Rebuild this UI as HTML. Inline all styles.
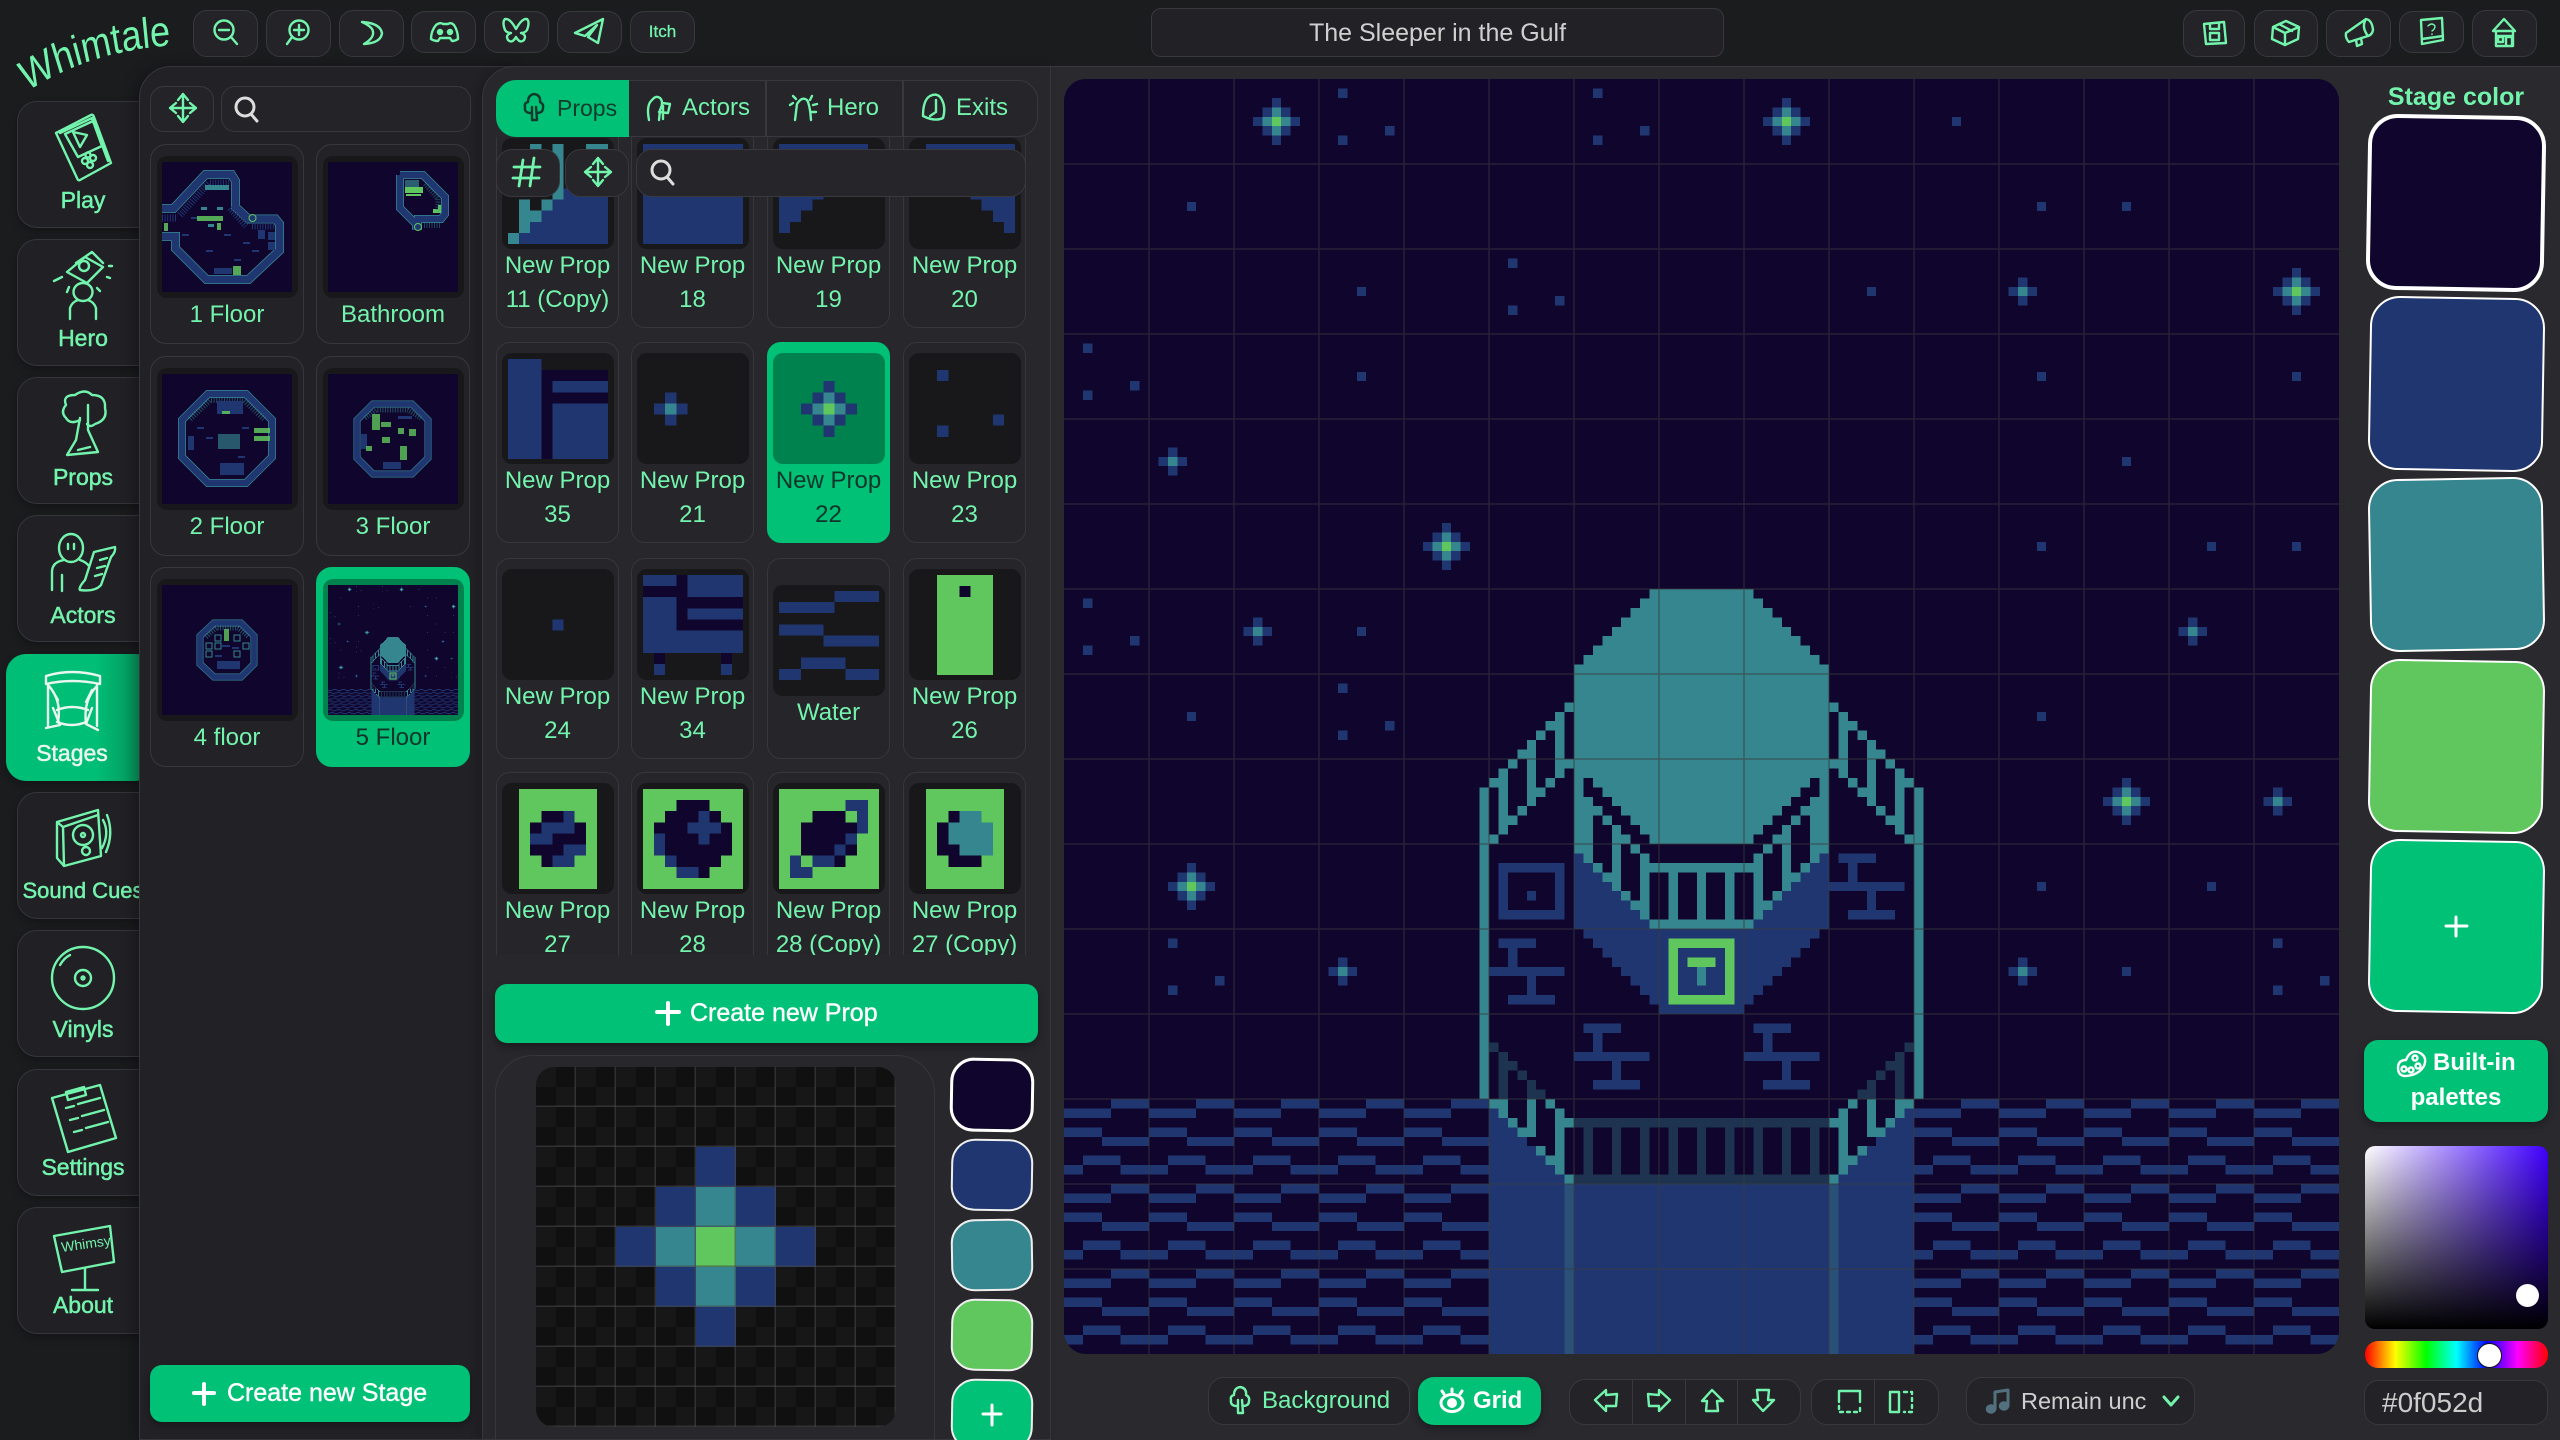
<!DOCTYPE html>
<html><head><meta charset="utf-8"><title>Whimtale</title>
<style>
*{box-sizing:border-box;margin:0;padding:0}
html,body{width:2560px;height:1440px;overflow:hidden;background:#1b1c1e;font-family:"Liberation Sans",sans-serif;color:#73f4ad}
#root{position:relative;width:2560px;height:1440px;overflow:hidden;background:#1b1c1e}
.a{position:absolute}
.x{position:absolute;white-space:nowrap;line-height:30px;font-size:24px}
.bt{position:absolute;background:#242428;border:1.5px solid #38383e;border-radius:14px}
.nv{position:absolute;left:17px;width:150px;height:127px;border:1.5px solid #35353b;border-radius:20px;background:#212125;box-shadow:0 4px 8px rgba(0,0,0,.25)}
.nl{position:absolute;left:17px;width:132px;text-align:center;line-height:30px;font-size:23px;-webkit-text-stroke:.5px currentColor;white-space:nowrap}
.c{position:absolute;width:123px;height:201px;background:#25252a;border:1.5px solid #37373d;border-radius:14px;padding:10px 4px 0}
.c .w{width:112px;height:111px;background:#18181a;border-radius:10px;padding:6px;margin:0 auto}
.c svg{display:block;width:100px;height:100px;shape-rendering:crispEdges}
.c .l{text-align:center;line-height:34px;font-size:24px;white-space:nowrap}
.on{background:#00c176!important;border-color:#00c176!important;color:#12352a!important}
.on .w{background:#00824f!important}
.f{position:absolute;width:154px;height:200px;background:#232327;border:1.5px solid #37373d;border-radius:16px;padding:11px 6px 0}
.f .w{width:141px;height:142px;background:#18181a;border-radius:10px;padding:6px 5px}
.f svg{display:block;width:130px;height:130px}
.f .l{text-align:center;line-height:34px;font-size:24px}
.sw{position:absolute;border:2px solid #fff;border-radius:30px}
.sq{position:absolute;border:2px solid #eee;border-radius:24px}
.b{fill:#203671}.t{fill:#36868f}.g{fill:#5fc75d}.n{fill:#0f052d}.d{fill:#1e3350}
</style></head><body>
<div id="root">

<!-- shared pixel defs -->
<svg width="0" height="0" style="position:absolute">
<defs>
<pattern id="wt" x="0" y="0" width="9" height="9" patternUnits="userSpaceOnUse"><path class="b" shape-rendering="crispEdges" d="M5 0h4v1H5zM0 1h5v1H0zM0 3h4v1H0zM4 4h5v1H4zM2 6h4v1H2zM0 7h2v1H0zM6 7h3v1H6z"/></pattern>
<g id="bs"><path class="b" d="M0-2h1v5H0zM-1-1h3v3h-3zM-2 0h5v1h-5z"/><path class="t" d="M0-1h1v3H0zM-1 0h3v1h-3z"/><path class="g" d="M0 0h1v1H0z"/></g>
<g id="ss"><path class="b" d="M0-1h1v3H0zM-1 0h3v1h-3z"/><path class="t" d="M0 0h1v1H0z"/></g>
<path id="s3" class="b" d="M2 1h1v1H2zM7 5h1v1H7zM2 6h1v1H2z"/>
<path id="s1" class="b" d="M0 0h1v1H0z"/>
<path id="tb" class="b" d="M1 0h4v1H1zM2 1h1v2H2zM0 3h8v1H0zM4 4h1v2H4zM2 6h5v1H2z"/>
<g id="lh">
<path class="t" d="M44 75h1v33h-1zM53 66h1v1h-1zM52 67h1v7h-1zM51 68h1v1h-1zM53 72h1v1h-1zM51 74h1v1h-1zM50 69h1v1h-1zM48 71h1v1h-1zM49 70h1v7h-1zM50 75h1v1h-1zM48 77h1v1h-1zM47 72h1v1h-1zM46 73h1v7h-1zM45 74h1v1h-1zM47 78h1v1h-1zM45 80h1v1h-1z"/>
<path class="n" d="M55 74h1v1h-1zM55 75h2v1h-2zM56 76h2v1h-2zM57 77h2v1h-2zM56 78h1v1h-1zM58 78h2v1h-2zM56 79h2v1h-2zM59 79h2v1h-2zM56 80h2v1h-2zM60 80h2v1h-2z"/>
<path class="t" d="M54 81h2v1h-2zM58 81h1v1h-1zM60 81h1v1h-1zM55 82h1v1h-1zM58 82h1v1h-1zM61 82h1v7h-1zM56 83h1v1h-1zM58 83h1v3h-1zM57 84h1v1h-1zM59 86h1v1h-1zM60 87h1v1h-1z"/>
<path class="b" d="M54 82h1v1h-1zM54 83h2v1h-2zM54 84h3v1h-3zM54 85h4v1h-4zM54 86h5v1h-5zM54 87h6v1h-6zM54 88h7v1h-7zM54 89h8v1h-8z"/>
<path class="d" d="M45 102h1v1h-1zM46 103h1v5h-1zM47 104h1v1h-1zM48 105h1v1h-1zM49 106h1v2h-1zM50 107h1v1h-1z"/>
<path class="b" d="M45 109h1v1h-1zM45 110h2v1h-2zM45 111h3v1h-3zM45 112h4v1h-4zM45 113h5v1h-5zM45 114h6v1h-6zM45 115h7v1h-7zM45 116h8v1h-8z"/>
<path class="t" d="M45 108h2v1h-2zM49 108h1v4h-1zM51 108h1v1h-1zM46 109h1v1h-1zM52 109h1v7h-1zM47 110h1v1h-1zM53 110h1v1h-1zM48 111h1v1h-1zM50 113h1v1h-1zM51 114h1v1h-1zM53 116h1v1h-1z"/>
<path fill="#2a5078" d="M53 117h1v18h-1z"/>
</g>
<symbol id="st" viewBox="0 0 135 135" shape-rendering="crispEdges">
<rect width="135" height="135" class="n"/>
<rect x="0" y="108" width="45" height="27" fill="url(#wt)"/>
<rect x="90" y="108" width="45" height="27" fill="url(#wt)"/>
<use href="#bs" x="22" y="4"/><use href="#bs" x="76" y="4"/><use href="#bs" x="130" y="22"/><use href="#bs" x="40" y="49"/><use href="#bs" x="112" y="76"/><use href="#bs" x="13" y="85"/>
<use href="#ss" x="101" y="22"/><use href="#ss" x="11" y="40"/><use href="#ss" x="20" y="58"/><use href="#ss" x="119" y="58"/><use href="#ss" x="128" y="76"/><use href="#ss" x="29" y="94"/><use href="#ss" x="101" y="94"/>
<use href="#s3" x="27" y="0"/><use href="#s3" x="54" y="0"/><use href="#s3" x="0" y="27"/><use href="#s3" x="45" y="18"/><use href="#s3" x="0" y="54"/><use href="#s3" x="27" y="63"/><use href="#s3" x="9" y="90"/><use href="#s3" x="126" y="90"/>
<use href="#s1" x="94" y="4"/><use href="#s1" x="13" y="13"/><use href="#s1" x="103" y="13"/><use href="#s1" x="112" y="13"/><use href="#s1" x="31" y="22"/><use href="#s1" x="85" y="22"/><use href="#s1" x="31" y="31"/><use href="#s1" x="103" y="31"/><use href="#s1" x="130" y="31"/><use href="#s1" x="112" y="40"/><use href="#s1" x="121" y="49"/><use href="#s1" x="103" y="49"/><use href="#s1" x="130" y="49"/><use href="#s1" x="13" y="67"/><use href="#s1" x="103" y="67"/><use href="#s1" x="121" y="85"/><use href="#s1" x="103" y="85"/><use href="#s1" x="112" y="94"/><use href="#s1" x="31" y="58"/>
<!-- dome -->
<path class="t" d="M62 54h11v1H62zM61 55h13v1H61zM60 56h15v1H60zM59 57h17v1H59zM58 58h19v1H58zM57 59h21v1H57zM56 60h23v1H56zM55 61h25v1H55zM54 62h27v19H54z"/>
<!-- lower center -->
<path class="n" d="M56 81h23v3H56z"/>
<path class="t" d="M62 83h11v1H62zM62 89h11v1H62zM64 84h1v5h-1zM67 84h1v5h-1zM70 84h1v5h-1z"/>
<path class="b" d="M55 90h25v1H55zM56 91h23v1H56zM57 92h21v1H57zM58 93h19v1H58zM59 94h17v1H59zM60 95h15v1H60zM61 96h13v1H61zM62 97h11v1H62zM63 98h9v1h-9z"/>
<path class="g" d="M64 91h7v7h-7z"/>
<path class="b" d="M65 92h5v5h-5z"/>
<path class="g" d="M66 93h3v1h-3z"/>
<path class="t" d="M67 94h1v2h-1z"/>
<use href="#lh"/><use href="#lh" transform="translate(135,0) scale(-1,1)"/>
<use href="#tb" x="54" y="100"/><use href="#tb" x="72" y="100"/><use href="#tb" x="45" y="91"/><use href="#tb" x="81" y="82"/>
<path class="b" fill-rule="evenodd" d="M46 83h7v6h-7zM47 84v4h5v-4zM49 86h1v1h-1z"/>
<path class="b" d="M45 117h45v18H45z"/>
<path fill="#2a5078" d="M53 117h1v18h-1zM81 117h1v18h-1z"/>
<path class="d" d="M54 110h27v1H54zM54 116h27v1H54zM55 111h1v5h-1zM58 111h1v5h-1zM61 111h1v5h-1zM64 111h1v5h-1zM67 111h1v5h-1zM70 111h1v5h-1zM73 111h1v5h-1zM76 111h1v5h-1zM79 111h1v5h-1z"/>
</symbol>
<path id="mv" d="M0-14V14M-13 0H13M-5-8L0-14L5-8M-5 8L0 14L5 8M-7-5L-13 0L-7 5M7-5L13 0L7 5"/>
<g id="se"><circle cx="0" cy="0" r="9" /><path d="M6 7L12 14"/></g>
<path id="tr" d="M-3 6Q-10 6-9 0Q-10-4-6-5Q-6-12 0-13Q7-12 6-5Q10-3 9 1Q9 6 3 6M-2 0L-2 13L3 13L2 0"/>
</defs></svg>

<!-- NAV -->
<div class="nv" style="top:101px"></div>
<div class="nv" style="top:239px"></div>
<div class="nv" style="top:377px"></div>
<div class="nv" style="top:515px"></div>
<div class="nv" style="top:654px;left:6px;border:0;background:linear-gradient(90deg,#00be75 0,#00be75 60%,#05945b 90%)"></div>
<div class="nv" style="top:792px"></div>
<div class="nv" style="top:930px"></div>
<div class="nv" style="top:1069px"></div>
<div class="nv" style="top:1207px"></div>
<div class="nl" style="top:185px">Play</div>
<div class="nl" style="top:323px">Hero</div>
<div class="nl" style="top:462px">Props</div>
<div class="nl" style="top:600px">Actors</div>
<div class="nl" style="top:738px;left:6px;color:#eaf7f0">Stages</div>
<div class="nl" style="top:876px;font-size:22px">Sound Cues</div>
<div class="nl" style="top:1014px">Vinyls</div>
<div class="nl" style="top:1152px">Settings</div>
<div class="nl" style="top:1290px">About</div>

<!-- TOP BAR -->
<div class="bt" style="left:193px;top:10px;width:65px;height:47px"></div>
<div class="bt" style="left:266px;top:10px;width:65px;height:47px"></div>
<div class="bt" style="left:339px;top:10px;width:65px;height:47px"></div>
<div class="bt" style="left:411px;top:11px;width:65px;height:42px"></div>
<div class="bt" style="left:484px;top:11px;width:65px;height:42px"></div>
<div class="bt" style="left:557px;top:11px;width:65px;height:42px"></div>
<div class="bt" style="left:630px;top:11px;width:65px;height:42px"></div>
<div class="x" style="left:630px;width:65px;top:17px;text-align:center;font-size:17px;-webkit-text-stroke:.3px currentColor">Itch</div>
<div class="bt" style="left:1151px;top:8px;width:573px;height:49px;background:#222226;border-radius:10px"></div>
<div class="x" style="left:1151px;width:573px;top:18px;text-align:center;font-size:25px;color:#d0d0d0">The Sleeper in the Gulf</div>
<div class="bt" style="left:2183px;top:10px;width:62px;height:47px"></div>
<div class="bt" style="left:2254px;top:10px;width:64px;height:47px"></div>
<div class="bt" style="left:2326px;top:10px;width:65px;height:47px"></div>
<div class="bt" style="left:2399px;top:11px;width:65px;height:42px"></div>
<div class="bt" style="left:2472px;top:10px;width:65px;height:47px"></div>

<!-- MAIN BG -->
<div class="a" style="left:1000px;top:66px;width:1560px;height:1374px;background:#29292e;border-top:1.5px solid #3a3a40"></div>

<!-- STAGE LIST PANEL -->
<div class="a" style="left:139px;top:66px;width:380px;height:1374px;background:#222226;border:1.5px solid #36363c;border-radius:32px 0 0 0;box-shadow:-6px 0 12px rgba(0,0,0,.25)"></div>
<div class="bt" style="left:150px;top:86px;width:64px;height:46px"></div>
<div class="bt" style="left:221px;top:86px;width:250px;height:46px"></div>

<div class="f" style="left:150px;top:144px"><div class="w"><svg viewBox="0 0 130 130"><rect width="130" height="130" class="n"/>
<path d="M0 46.5L11.5 46.5L43.5 12.5L69.5 12.5L73.5 19L73.5 45L86.5 57L113.5 57L117.5 62L117.5 88.5L86.5 117.5L44.5 117.5L13.5 86.5L13.5 74.5L0 74.5" fill="none" stroke="#36868f" stroke-width="9"/>
<path d="M0 46.5L11.5 46.5L43.5 12.5L69.5 12.5L73.5 19L73.5 45L86.5 57L113.5 57L117.5 62L117.5 88.5L86.5 117.5L44.5 117.5L13.5 86.5L13.5 74.5L0 74.5" fill="none" stroke="#203671" stroke-width="7.4"/>
<path d="M18 53L47 21L68 21M68 46L84 64M90 64H112M0 56H15" fill="none" stroke="#203671" stroke-width="7" stroke-dasharray="1 1.6"/>
<path class="t" d="M43 23h24v5H43zM39 45h6v3h-6zM55 45h6v3h-6zM46 62h6v3h-6z"/>
<path class="b" d="M96 68h7v9h-7zM106 70h7v8h-7zM106 80h7v8h-7zM29 55h7v2h-7zM20 72h7v2h-7zM62 72h7v2h-7zM81 80h7v2h-7zM90 88h7v2h-7zM44 88h7v2h-7zM72 97h7v2h-7zM52 106h18v6H52z"/>
<path class="g" d="M35 54h26v5H35zM55 61h4v7h-4zM2 61h4v8H2zM71 104h8v9h-8z" opacity=".85"/>
<circle cx="90.500" cy="56" r="3.500" fill="none" stroke="#5fc75d"/></svg></div><div class="l">1 Floor</div></div>

<div class="f" style="left:316px;top:144px"><div class="w"><svg viewBox="0 0 130 130"><rect width="130" height="130" class="n"/>
<path d="M72 13L95 13L117 35L117 52L113 57L90 57L90 68M72 13L72 46L88 62L88 68" fill="none" stroke="#36868f" stroke-width="8"/>
<path d="M72 13L95 13L117 35L117 52L113 57L90 57L90 68M72 13L72 46L88 62L88 68" fill="none" stroke="#203671" stroke-width="6.500"/>
<path class="t" d="M77 18h14v7H77z" opacity=".7"/>
<path class="g" d="M77 25h18v6H77zM78 32h15v2H78zM105 47h8v4h-8zM110 43h3v5h-3z"/>
<path d="M97 22L110 37V50" fill="none" stroke="#36868f" stroke-width="5" stroke-dasharray="1 1.500" opacity=".5"/>
<path d="M96 63h16" stroke="#36868f" stroke-width="6" stroke-dasharray="1 1.500" opacity=".5"/>
<circle cx="90" cy="65" r="3.500" fill="none" stroke="#5fc75d"/></svg></div><div class="l">Bathroom</div></div>

<div class="f" style="left:150px;top:356px"><div class="w"><svg viewBox="0 0 130 130"><rect width="130" height="130" class="n"/>
<polygon points="46,20 84,20 110,46 110,83 84,109 46,109 20,83 20,46" fill="none" stroke="#36868f" stroke-width="8"/>
<polygon points="46,20 84,20 110,46 110,83 84,109 46,109 20,83 20,46" fill="none" stroke="#203671" stroke-width="6.500"/>
<path d="M28 45L48 26H82L102 45" fill="none" stroke="#36868f" stroke-width="6" stroke-dasharray="1 1.600" opacity=".55"/>
<path class="b" d="M55 27h26v13H55zM26 62h6v14h-6zM58 89h24v12H58zM35 53h7v2h-7zM44 63h7v2h-7zM80 53h7v2h-7zM76 82h7v2h-7z"/>
<path class="t" d="M56 60h22v15H56z" opacity=".65"/>
<path class="g" d="M60 37h8v3h-8zM92 54h16v5H92zM92 62h16v5H92z" opacity=".85"/></svg></div><div class="l">2 Floor</div></div>

<div class="f" style="left:316px;top:356px"><div class="w"><svg viewBox="0 0 130 130"><rect width="130" height="130" class="n"/>
<polygon points="45,30 84,30 100,46 100,84 84,100 45,100 29,84 29,46" fill="none" stroke="#36868f" stroke-width="7"/>
<polygon points="45,30 84,30 100,46 100,84 84,100 45,100 29,84 29,46" fill="none" stroke="#203671" stroke-width="5.800"/>
<path d="M37 44L48 36H80L93 44" fill="none" stroke="#36868f" stroke-width="5" stroke-dasharray="1 1.500" opacity=".55"/>
<path class="b" d="M33 60h6v15h-6zM55 88h18v7H55zM70 42h14v3H70z"/>
<path class="g" d="M44 40h8v16h-8zM53 48h10v5H53zM70 54h6v6h-6zM81 55h7v7h-7zM54 63h8v6h-8zM72 72h7v14h-7zM38 72h6v5h-6z" opacity=".8"/></svg></div><div class="l">3 Floor</div></div>

<div class="f" style="left:150px;top:567px"><div class="w"><svg viewBox="0 0 130 130"><rect width="130" height="130" class="n"/>
<polygon points="52,38 79,38 92,51 92,79 79,92 52,92 38,79 38,51" fill="none" stroke="#36868f" stroke-width="7"/>
<polygon points="52,38 79,38 92,51 92,79 79,92 52,92 38,79 38,51" fill="none" stroke="#203671" stroke-width="5.800"/>
<path d="M44 52L54 43H76L87 52" fill="none" stroke="#36868f" stroke-width="5" stroke-dasharray="1 1.500" opacity=".6"/>
<path fill="none" stroke="#36868f" d="M53 50h6v6h-6zM72 50h6v6h-6zM44 58h6v6h-6zM53 58h6v6h-6zM44 66h6v6h-6zM72 66h6v6h-6zM81 58h6v6h-6z"/>
<path class="g" d="M62 44h5v12h-5z" opacity=".8"/>
<path class="b" d="M55 76h23v8H55zM60 60h8v2h-8zM70 62h7v2h-7zM53 70h7v2h-7z"/></svg></div><div class="l">4 floor</div></div>

<div class="f on" style="left:316px;top:567px"><div class="w"><svg viewBox="0 0 130 130"><use href="#st" width="130" height="130"/></svg></div><div class="l">5 Floor</div></div>

<div class="bt" style="left:150px;top:1365px;width:320px;height:57px;background:#00c176;border:0;border-radius:12px;box-shadow:0 4px 8px rgba(0,0,0,.3)"></div>
<div class="x" style="left:227px;top:1378px;color:#fff;font-size:25px;-webkit-text-stroke:.4px #fff">Create new Stage</div>

<!-- PROPS PANEL -->
<div class="a" style="left:482px;top:66px;width:569px;height:1374px;background:#27272c;border:1.5px solid #36363c;border-radius:32px 0 0 0;box-shadow:-4px 0 10px rgba(0,0,0,.2)"></div>
<div class="a" style="left:0;top:137px;width:1050px;height:818px;overflow:hidden">
<!-- row 1 -->
<div class="c" style="left:496px;top:-10px"><div class="w"><svg viewBox="0 0 9 9"><path class="t" d="M2 0h1v1H2zM4 0h1v5H4zM7 0h2v1H7zM1 5h1v3H1zM3 5h1v1H3zM2 6h1v1H2zM0 8h1v1H0z"/><path class="b" d="M4 5h5v1H4zM3 6h6v1H3zM2 7h7v1H2zM1 8h8v1H1zM5 4h4v1H5z"/></svg></div><div class="l">New Prop<br>11 (Copy)</div></div>
<div class="c" style="left:631px;top:-10px"><div class="w"><svg viewBox="0 0 9 9"><path class="b" d="M0 0h9v9H0z"/></svg></div><div class="l">New Prop<br>18</div></div>
<div class="c" style="left:767px;top:-10px"><div class="w"><svg viewBox="0 0 9 9"><path class="b" d="M0 0h8v1H0zM0 1h7v3H0zM0 4h4v1H0zM0 5h3v1H0zM0 6h2v1H0zM0 7h1v1H0z"/></svg></div><div class="l">New Prop<br>19</div></div>
<div class="c" style="left:903px;top:-10px"><div class="w"><svg viewBox="0 0 9 9"><path class="b" d="M1 0h8v1H1zM2 1h7v3H2zM5 4h4v1H5zM6 5h3v1H6zM7 6h2v1H7zM8 7h1v1H8z"/></svg></div><div class="l">New Prop<br>20</div></div>
<!-- row 2 -->
<div class="c" style="left:496px;top:205px"><div class="w"><svg viewBox="0 0 9 9"><path class="n" d="M3 1h6v8H3z"/><path class="b" d="M0 0h3v9H0zM4 2h5v1H4zM4 4h5v5H4z"/></svg></div><div class="l">New Prop<br>35</div></div>
<div class="c" style="left:631px;top:205px"><div class="w"><svg viewBox="0 0 9 9"><path class="b" d="M2 3h1v3H2zM1 4h3v1H1z"/><path class="t" d="M2 4h1v1H2z"/></svg></div><div class="l">New Prop<br>21</div></div>
<div class="c on" style="left:767px;top:205px"><div class="w"><svg viewBox="0 0 9 9"><path class="b" d="M4 2h1v5H4zM3 3h3v3H3zM2 4h5v1H2z"/><path class="t" d="M4 3h1v3H4zM3 4h3v1H3z"/><path class="g" d="M4 4h1v1H4z"/></svg></div><div class="l">New Prop<br>22</div></div>
<div class="c" style="left:903px;top:205px"><div class="w"><svg viewBox="0 0 9 9"><path class="b" d="M2 1h1v1H2zM7 5h1v1H7zM2 6h1v1H2z"/></svg></div><div class="l">New Prop<br>23</div></div>
<!-- row 3 -->
<div class="c" style="left:496px;top:421px"><div class="w"><svg viewBox="0 0 9 9"><path class="b" d="M4 4h1v1H4z"/></svg></div><div class="l">New Prop<br>24</div></div>
<div class="c" style="left:631px;top:421px"><div class="w"><svg viewBox="0 0 9 9"><path class="n" d="M0 0h9v7H0zM1 7h1v1H1zM7 7h1v1H7z"/><path class="b" d="M0 0h3v1H0zM4 0h5v2H4zM0 2h3v3H0zM4 3h5v1H4zM0 5h9v2H0zM1 8h1v1H1zM7 8h1v1H7z"/></svg></div><div class="l">New Prop<br>34</div></div>
<div class="c" style="left:767px;top:421px;padding-top:26px"><div class="w"><svg viewBox="0 0 9 9"><path class="b" d="M5 0h4v1H5zM0 1h5v1H0zM0 3h4v1H0zM4 4h5v1H4zM2 6h4v1H2zM0 7h2v1H0zM6 7h3v1H6z"/></svg></div><div class="l">Water</div></div>
<div class="c" style="left:903px;top:421px"><div class="w"><svg viewBox="0 0 9 9"><path class="g" d="M2 0h5v9H2z"/><path class="n" d="M4 1h1v1H4z"/></svg></div><div class="l">New Prop<br>26</div></div>
<!-- row 4 -->
<div class="c" style="left:496px;top:635px"><div class="w"><svg viewBox="0 0 9 9"><path class="g" d="M1 0h7v9H1z"/><path class="n" d="M3 2h2v1H3zM2 3h1v1H2zM6 3h1v1H6zM4 4h3v1H4zM2 5h3v1H2zM3 6h1v1H3z"/><path class="b" d="M5 2h1v1H5zM3 3h3v1H3zM2 4h2v1H2zM5 5h2v1H5zM4 6h2v1H4z"/></svg></div><div class="l">New Prop<br>27</div></div>
<div class="c" style="left:631px;top:635px"><div class="w"><svg viewBox="0 0 9 9"><path class="g" d="M0 0h9v9H0z"/><path class="n" d="M3 1h3v1H3zM2 2h3v1H2zM6 2h1v1H6zM1 3h3v1H1zM7 3h1v1H7zM2 4h3v1H2zM6 4h2v1H6zM2 5h6v1H2zM3 6h4v1H3zM5 7h1v1H5z"/><path class="b" d="M5 2h1v1H5zM4 3h3v1H4zM1 4h1v2H1zM5 4h1v1H5zM2 6h1v1H2zM3 7h2v1H3z"/></svg></div><div class="l">New Prop<br>28</div></div>
<div class="c" style="left:767px;top:635px"><div class="w"><svg viewBox="0 0 9 9"><path class="g" d="M0 0h9v9H0z"/><path class="n" d="M3 2h3v1H3zM2 3h5v1H2zM2 4h4v1H2zM2 5h3v1H2zM6 5h1v1H6zM5 6h1v1H5z"/><path class="b" d="M6 1h2v1H6zM7 2h1v2H7zM6 4h1v1H6zM5 5h1v1H5zM1 6h1v2H1zM3 6h2v1H3zM2 7h1v1H2z"/></svg></div><div class="l">New Prop<br>28 (Copy)</div></div>
<div class="c" style="left:903px;top:635px"><div class="w"><svg viewBox="0 0 9 9"><path class="g" d="M1 0h7v9H1z"/><path class="n" d="M3 2h1v1H3zM2 3h1v2H2zM2 5h2v1H2zM3 6h3v1H3z"/><path class="t" d="M4 2h2v1H4zM3 3h4v2H3zM4 5h3v1H4z"/></svg></div><div class="l">New Prop<br>27 (Copy)</div></div>
</div>

<!-- tabs -->
<div class="a" style="left:496px;top:80px;width:542px;height:57px;background:#25252a;border:1.5px solid #38383e;border-radius:20px"></div>
<div class="a" style="left:496px;top:80px;width:133px;height:57px;background:#00c176;border-radius:20px 0 0 20px"></div>
<div class="a" style="left:765px;top:80px;width:1.5px;height:57px;background:#38383e"></div>
<div class="a" style="left:902px;top:80px;width:1.5px;height:57px;background:#38383e"></div>
<div class="x" style="left:557px;top:93px;color:#143a2c;font-size:23px">Props</div>
<div class="x" style="left:682px;top:93px">Actors</div>
<div class="x" style="left:827px;top:93px">Hero</div>
<div class="x" style="left:956px;top:93px">Exits</div>
<!-- props toolbar -->
<div class="bt" style="left:496px;top:149px;width:64px;height:48px;background:#25252a;border-radius:16px"></div>
<div class="bt" style="left:565px;top:149px;width:64px;height:48px;background:#25252a;border-radius:16px"></div>
<div class="bt" style="left:636px;top:149px;width:390px;height:48px;background:#25252a;border-radius:16px"></div>
<!-- create prop -->
<div class="bt" style="left:495px;top:984px;width:543px;height:59px;background:#00c176;border:0;border-radius:12px;box-shadow:0 4px 8px rgba(0,0,0,.3)"></div>
<div class="x" style="left:690px;top:998px;color:#fff;font-size:25px;-webkit-text-stroke:.4px #fff">Create new Prop</div>

<!-- editor -->
<div class="a" style="left:495px;top:1055px;width:440px;height:385px;border:1.5px solid #36363c;border-bottom:0;border-radius:38px 38px 0 0"></div>
<div class="a" style="left:535.500px;top:1067px;width:360px;height:360px;border-radius:18px;overflow:hidden;background:repeating-conic-gradient(#101010 0 25%,#171717 0 50%) 0 0/40px 40px">
<svg viewBox="0 0 9 9" width="360" height="360" style="position:absolute;left:0;top:0;shape-rendering:crispEdges"><path class="b" d="M4 2h1v5H4zM3 3h3v3H3zM2 4h5v1H2z"/><path class="t" d="M4 3h1v3H4zM3 4h3v1H3z"/><path class="g" d="M4 4h1v1H4z"/></svg>
<div class="a" style="inset:0;background:linear-gradient(90deg,transparent 38.500px,rgba(70,70,75,.6) 38.500px) 0 0/40px 40px,linear-gradient(transparent 38.500px,rgba(70,70,75,.6) 38.500px) 0 0/40px 40px"></div>
</div>
<div class="sw" style="left:950px;top:1058px;width:84px;height:74px;background:#0f052d;border-width:3.500px;border-radius:24px;transform:rotate(1deg)"></div>
<div class="sq" style="left:951px;top:1139px;width:82px;height:72px;background:#203671;transform:rotate(1deg)"></div>
<div class="sq" style="left:951px;top:1219px;width:82px;height:72px;background:#36868f;transform:rotate(-1deg)"></div>
<div class="sq" style="left:951px;top:1299px;width:82px;height:72px;background:#5fc75d;transform:rotate(1deg)"></div>
<div class="sq" style="left:951px;top:1379px;width:82px;height:72px;background:#00c176;transform:rotate(1deg)"></div>

<!-- STAGE -->
<div class="a" style="left:1064px;top:79px;width:1275px;height:1275px;border-radius:22px;overflow:hidden">
<svg width="1275" height="1275" viewBox="0 0 1275 1275" style="display:block"><use href="#st" width="1275" height="1275"/>
<path d="M85 0V1275M170 0V1275M255 0V1275M340 0V1275M425 0V1275M510 0V1275M595 0V1275M680 0V1275M765 0V1275M850 0V1275M935 0V1275M1020 0V1275M1105 0V1275M1190 0V1275M0 85H1275M0 170H1275M0 255H1275M0 340H1275M0 425H1275M0 510H1275M0 595H1275M0 680H1275M0 765H1275M0 850H1275M0 935H1275M0 1020H1275M0 1105H1275M0 1190H1275" stroke="#3a3a3e" stroke-opacity=".55" stroke-width="1.500" fill="none"/></svg>
</div>

<!-- BOTTOM BAR -->
<div class="bt" style="left:1208px;top:1377px;width:202px;height:48px;border-radius:16px"></div>
<div class="bt" style="left:1418px;top:1377px;width:123px;height:48px;border-radius:16px;background:#00c176;border:0;box-shadow:0 4px 8px rgba(0,0,0,.3)"></div>
<div class="bt" style="left:1569px;top:1379px;width:232px;height:46px;border-radius:16px"></div>
<div class="a" style="left:1632px;top:1379px;width:1px;height:46px;background:#38383e"></div>
<div class="a" style="left:1685px;top:1379px;width:1px;height:46px;background:#38383e"></div>
<div class="a" style="left:1737px;top:1379px;width:1px;height:46px;background:#38383e"></div>
<div class="bt" style="left:1811px;top:1379px;width:128px;height:46px;border-radius:16px"></div>
<div class="a" style="left:1874px;top:1379px;width:1px;height:46px;background:#38383e"></div>
<div class="bt" style="left:1966px;top:1377px;width:229px;height:48px;border-radius:16px"></div>
<div class="x" style="left:1262px;top:1386px;font-size:24px">Background</div>
<div class="x" style="left:1473px;top:1386px;color:#fff;font-weight:bold;font-size:24px">Grid</div>
<div class="x" style="left:2021px;top:1386px;color:#cfcfcf;font-size:23.500px">Remain unc</div>

<!-- RIGHT COLUMN -->
<div class="x" style="left:2356px;width:200px;top:82px;text-align:center;font-size:25px;font-weight:bold">Stage color</div>
<div class="sw" style="left:2367px;top:115px;width:178px;height:176px;background:#0f052d;border-width:4px;transform:rotate(1deg)"></div>
<div class="sw" style="left:2369px;top:297px;width:175px;height:174px;background:#203671;transform:rotate(1deg)"></div>
<div class="sw" style="left:2369px;top:478px;width:175px;height:173px;background:#36868f;transform:rotate(-1deg)"></div>
<div class="sw" style="left:2369px;top:660px;width:175px;height:173px;background:#5fc75d;transform:rotate(1deg)"></div>
<div class="sw" style="left:2369px;top:840px;width:175px;height:173px;background:#00c176;transform:rotate(1deg)"></div>
<div class="bt" style="left:2364px;top:1040px;width:184px;height:82px;background:#00c176;border:0;border-radius:14px;box-shadow:0 4px 8px rgba(0,0,0,.25)"></div>
<div class="x" style="left:2433px;top:1048px;color:#fff;font-weight:bold;font-size:24px">Built-in</div>
<div class="x" style="left:2364px;width:184px;top:1083px;text-align:center;color:#fff;font-weight:bold;font-size:24px">palettes</div>
<div class="a" style="left:2365px;top:1146px;width:183px;height:183px;border-radius:10px;background:linear-gradient(to top,#000,transparent),linear-gradient(to right,#fff,hsl(255,100%,50%))"></div>
<div class="a" style="left:2516px;top:1284px;width:23px;height:23px;border-radius:50%;background:#fff"></div>
<div class="a" style="left:2365px;top:1341px;width:183px;height:27px;border-radius:13px;background:linear-gradient(to right,#f00,#ff0,#0f0,#0ff,#00f,#f0f,#f00)"></div>
<div class="a" style="left:2477px;top:1343px;width:25px;height:25px;border-radius:50%;background:#fff;border:1.500px solid #111"></div>
<div class="bt" style="left:2364px;top:1380px;width:184px;height:45px;background:#232327"></div>
<div class="x" style="left:2382px;top:1388px;font-size:28px;color:#cdcdcd">#0f052d</div>

<!-- ICON & LOGO OVERLAY -->
<svg class="a" style="left:0;top:0" width="2560" height="1440" viewBox="0 0 2560 1440" fill="none" stroke="#73f4ad" stroke-width="2.400" stroke-linecap="round" stroke-linejoin="round">
<defs><path id="lg" d="M0 92Q75 50 178 45"/></defs>
<g transform="translate(27 0) scale(.84 1)"><text font-family="'Liberation Sans',sans-serif" font-size="43" fill="#73f4ad" stroke="none"><textPath href="#lg">Whimtale</textPath></text></g>

<!-- top left -->
<circle cx="224" cy="30" r="9.500"/><path d="M231 37L237 44M219 30H229"/>
<circle cx="299" cy="30" r="9.500"/><path d="M292 37L287 44M294 30H304M299 25V35"/>
<path d="M362 22Q380 23 382 33Q381 43 364 44Q374 38 373 32Q373 27 362 22Z"/>
<path d="M436 25Q440 22 443 24H448Q451 22 454 25Q458 31 458 39Q455 41 452 41L450 38H440L438 41Q434 41 431 39Q431 31 436 25Z"/><circle cx="440" cy="32" r="2" fill="#73f4ad"/><circle cx="450" cy="32" r="2" fill="#73f4ad"/>
<path d="M516 29Q510 18 505 19Q502 22 505 30Q507 33 511 33Q505 35 508 40Q512 44 516 37Q520 44 524 40Q527 35 521 33Q525 33 527 30Q530 22 527 19Q522 18 516 29Z"/>
<path d="M603 19L575 33L585 36L597 25L588 37L598 43Z"/>
<!-- top right -->
<path d="M2204 24L2224 22L2226 43L2206 44ZM2210 33H2219V40H2210ZM2210 24V29H2219V23"/>
<path d="M2286 21L2299 27L2298 39L2285 45L2272 39L2273 27ZM2273 27L2285 33L2299 27M2285 33V45M2279 24L2292 31"/>
<path d="M2346 33L2366 19Q2372 20 2373 30Q2372 35 2368 36L2349 42Q2345 38 2346 33ZM2366 19Q2361 27 2368 36M2356 40L2357 46L2362 44L2361 38"/>
<path d="M2421 20L2442 18L2443 40L2422 44ZM2422 39L2443 36"/><path d="M2428 26Q2432 22 2435 26Q2435 29 2432 31M2432 34V34.500" stroke-width="1.400"/>
<path d="M2504 19L2515 31H2493ZM2496 31V46H2513V31M2496 36H2513M2498 37H2503V42H2498ZM2506 37H2512V46H2506Z"/>

<!-- nav icons -->
<path d="M56 133L91 115Q93 114 94 117L111 163L80 180Q78 181 77 178ZM60 133L92 118L108 161"/>
<path d="M65 134L93 121L102 146L78 157ZM73 132L87 135L80 147Z"/><circle cx="85" cy="161" r="3"/><circle cx="93" cy="158" r="3"/><circle cx="90" cy="165" r="3"/><circle cx="88" cy="155" r="2.500"/>
<path d="M67 272L85 257L103 267L87 283ZM76 263L92 252L103 263"/><circle cx="84" cy="266" r="5"/><ellipse cx="83" cy="292" rx="9.500" ry="9"/><path d="M70 319V308Q72 302 78 300M96 319V308Q94 302 88 300M54 281L62 277M67 292L69 287M107 277L110 278M97 288L100 291M109 266L112 266"/>
<path d="M80 420Q70 425 66 418Q60 412 66 405Q62 395 75 395Q85 388 92 395Q106 395 105 408Q108 420 95 424Q90 428 87 424M80 418L76 440L67 455L98 452L88 430L88 405M78 450L90 447"/>
<ellipse cx="71" cy="548" rx="12" ry="14"/><path d="M68 544V549M74 544V549M52 590V572Q52 562 64 560M80 560Q86 562 89 566M62 575V591M94 552L115 547Q116 552 111 557L101 585Q95 592 80 590Q78 588 85 580ZM100 560L107 558M97 568L105 566M95 576L102 574"/>
<g stroke="#eaf7f0"><path d="M46 676Q72 668 100 676V684Q72 678 46 684ZM48 685V726M97 685V726M48 685Q62 700 58 722M97 686Q83 700 86 724M57 710Q72 704 88 710M57 722Q72 728 86 722M46 728L60 725L53 708M98 730L86 724L92 708M52 690L58 700M92 690L86 702"/></g>
<path d="M57 822L98 810L101 856L64 866L57 858ZM63 827L64 866M57 822L63 827L98 815M103 820Q110 833 102 848M107 815Q114 833 106 852"/><circle cx="83" cy="835" r="10"/><circle cx="83" cy="835" r="2"/><circle cx="86" cy="851" r="4"/>
<circle cx="83" cy="978" r="31"/><circle cx="83" cy="978" r="8"/><circle cx="83" cy="978" r="1.500"/><path d="M60 965Q64 958 70 955"/>
<path d="M52 1098L100 1085L116 1138L68 1152ZM66 1092L84 1087L86 1095L68 1100ZM66 1108L74 1106M78 1104L100 1098M70 1120L78 1118M82 1116L104 1110M74 1132L82 1130M86 1128L108 1122"/>
<path d="M54 1236L110 1226L114 1262L62 1272ZM85 1268V1290M72 1290H98"/>
<text x="62" y="1252" font-family="'Liberation Sans',sans-serif" font-size="14" fill="#73f4ad" stroke="none" transform="rotate(-8 62 1252)">Whimsy</text>

<!-- panel -->
<use href="#mv" x="183" y="108"/><use href="#mv" x="598" y="172"/>
<g stroke="#ddd" stroke-width="3"><use href="#se" x="245" y="107"/><use href="#se" x="661" y="170"/></g>
<path d="M523 160L519 186M534 158L530 186M514 167H540M513 178H539" stroke-width="2.800"/>

<!-- tabs -->
<g stroke="#143a2c"><use href="#tr" x="534" y="107"/></g>
<path d="M649 120Q646 105 652 100Q656 95 660 98Q664 102 660 110L659 120M662 103L670 104L668 113L659 112M663 106V119"/>
<path d="M795 120L797 104Q802 96 807 100Q810 105 811 120M790 105L793 103M793 96L796 99M812 96L810 100M817 104L813 105M816 112L812 112"/>
<path d="M923 116Q923 100 930 96Q938 92 942 100Q946 108 943 118Q935 122 923 116ZM936 100V112L930 116"/>

<!-- create plus -->
<g stroke="#fff" stroke-width="4"><path d="M668 1003V1024M657 1012H679M204 1384V1404M194 1393H214"/></g>
<g stroke="#fff" stroke-width="3"><path d="M992 1405V1425M983 1414H1001"/><path d="M2456 917V936M2446 926H2467"/></g>
<!-- palette -->
<g stroke="#fff"><path d="M2398 1068Q2398 1060 2406 1060Q2410 1050 2418 1052Q2428 1056 2424 1066Q2418 1076 2404 1076Q2398 1075 2398 1068Z"/><circle cx="2415" cy="1058" r="2.500"/><circle cx="2418" cy="1066" r="2.500"/><circle cx="2411" cy="1070" r="2.500"/><circle cx="2404" cy="1069" r="2.500"/></g>

<!-- bottom -->
<use href="#tr" x="1240" y="1400"/>
<g stroke="#fff" stroke-width="3"><ellipse cx="1452" cy="1403" rx="11" ry="8.500"/><circle cx="1452" cy="1403" r="3.500" fill="#fff"/><path d="M1442 1391L1444 1394M1452 1389V1392M1462 1391L1460 1394"/></g>
<path d="M1595 1400L1606 1390V1395L1617 1394L1616 1406L1606 1406V1411Z"/>
<path d="M1670 1400L1659 1390V1395L1648 1394L1649 1406L1659 1406V1411Z"/>
<path d="M1712 1390L1723 1401L1717 1401L1718 1411L1706 1411L1707 1401L1702 1401Z"/>
<path d="M1763 1411L1774 1400L1768 1400L1769 1390L1757 1390L1758 1400L1753 1400Z"/>
<path d="M1839 1402V1391H1860V1402"/><path d="M1839 1406V1412H1860V1406" stroke-dasharray="3 4"/><path d="M1890 1392H1899V1412H1890Z"/><path d="M1904 1392H1912V1412H1904" stroke-dasharray="3 4"/>
<path d="M1995 1409V1392L2008 1390V1406" stroke="#53707f" stroke-width="3"/><ellipse cx="1991" cy="1409" rx="4" ry="3.500" fill="#53707f" stroke="#53707f"/><ellipse cx="2004" cy="1406" rx="4" ry="3.500" fill="#53707f" stroke="#53707f"/>
<path d="M2164 1397L2171 1405L2178 1397" stroke-width="3"/>
</svg>
</div>
</body></html>
